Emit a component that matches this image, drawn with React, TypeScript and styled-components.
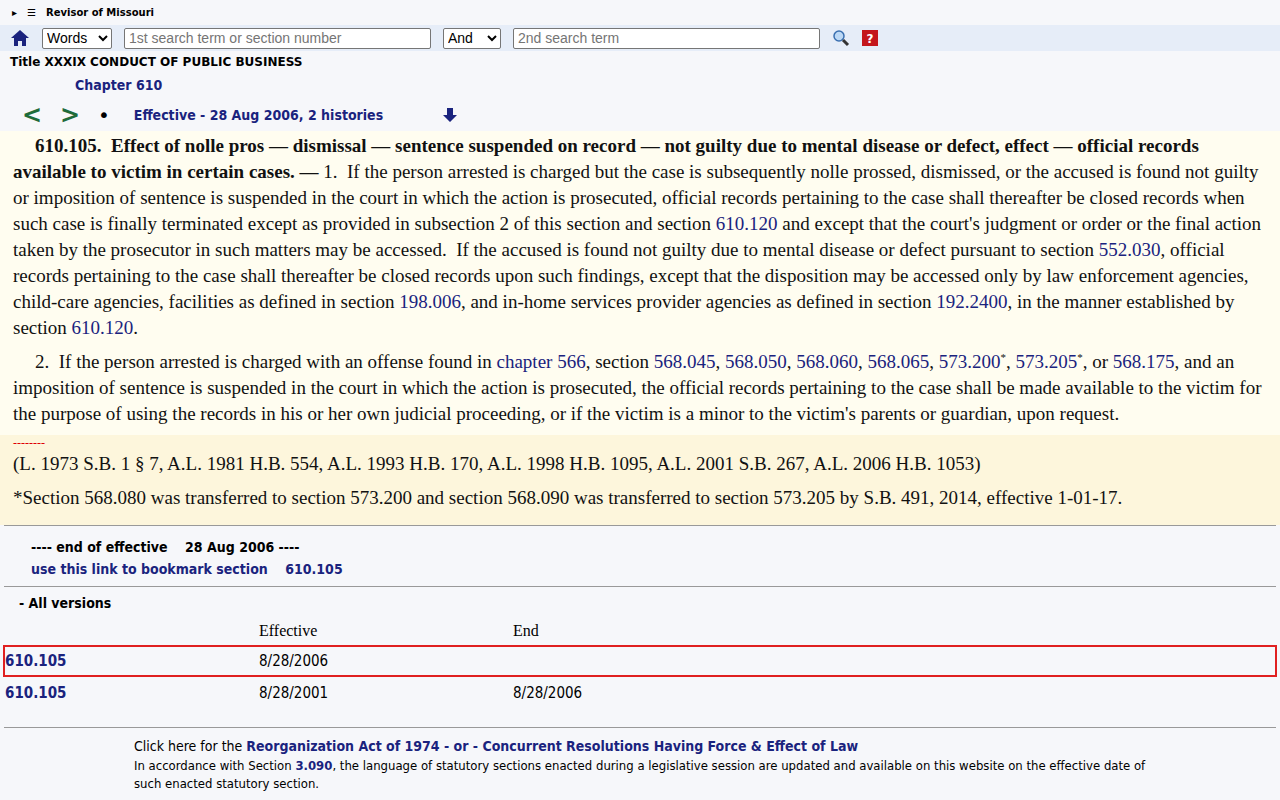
import styled, { createGlobalStyle } from "styled-components";

const Global = createGlobalStyle`
  body { margin: 0; background: #f6f7fa; font-family: "DejaVu Sans", Verdana, sans-serif; }
  a { color: #1a237e; text-decoration: none; }
`;

const TopLine = styled.div`
  display: flex; align-items: center; gap: 10px;
  height: 25px; padding: 0 12px; font-size: 10px; font-weight: 700;
`;
const Toolbar = styled.div`
  display: flex; align-items: center; height: 26px; background: #e6edf8;
  padding: 0 10px; gap: 12px;
`;
const Select = styled.select<{ $w: number }>`
  width: ${(p) => p.$w}px; height: 21px; font: 14px "Liberation Sans", Arial, sans-serif;
  border: 1px solid #767676; border-radius: 2px; background: #fff;
`;
const Input = styled.input`
  width: 307px; height: 21px; box-sizing: border-box; padding: 0 4px;
  font: 14px "Liberation Sans", Arial, sans-serif; border: 1px solid #767676; border-radius: 2px;
`;
const Title = styled.div`
  font-size: 12px; font-weight: 700; padding: 4px 10px 0; height: 16px;
`;
const Chapter = styled.div`
  font: 700 14px "DejaVu Sans Condensed", "DejaVu Sans", sans-serif;
  color: #1a237e; padding: 6px 0 0 75px; height: 22px;
`;
const NavRow = styled.div`
  display: flex; align-items: center; height: 32px; padding-left: 22px;
`;
const Arrow = styled.span`
  color: #1e6b3a; font-size: 24px; font-weight: 700; width: 38px;
`;
const Dot = styled.span`font-size: 20px;`;
const Effective = styled.span`
  color: #1a237e; font: 700 14px "DejaVu Sans Condensed", "DejaVu Sans", sans-serif;
  margin-left: 24px; width: 308px;
`;
const Section = styled.div`
  background: #fffdf0; font-family: "Liberation Serif", "Times New Roman", serif;
  font-size: 19px; line-height: 26px; padding: 2px 12px 0 13px; color: #111;
  a { color: #1a237e; }
  sup { font-size: 11px; line-height: 0; }
`;
const Para = styled.p`margin: 0 0 8px; text-indent: 22px;`;
const Hist = styled.div`
  background: #fdf6dc; margin: 0 -12px 0 -13px; padding: 0 13px 6px;
  p { margin: 0 0 8px; }
`;
const Dash = styled.div`color: #d00; font-size: 12px; line-height: 16px;`;
const Rule = styled.hr`border: 0; border-top: 1px solid #999; margin: 0 4px;`;
const EndBlock = styled.div`
  padding: 10px 0 6px 31px; line-height: 22px;
  font: 700 14px/22px "DejaVu Sans Condensed", "DejaVu Sans", sans-serif;
`;
const Versions = styled.div`padding: 8px 0 0;`;
const VersionsTitle = styled.div`
  font: 700 14px "DejaVu Sans Condensed", "DejaVu Sans", sans-serif;
  padding-left: 19px; height: 22px;
`;
const Grid = styled.div<{ $box?: boolean }>`
  display: grid; grid-template-columns: 254px 254px 1fr; align-items: center;
  height: 28px; margin: 0 3px; padding-left: 0;
  border: 2px solid ${(p) => (p.$box ? "#e02020" : "transparent")};
  font: 15px "DejaVu Sans Condensed", "DejaVu Sans", sans-serif;
  a { font-weight: 700; }
`;
const Head = styled(Grid)`
  height: 24px; font: 16px "Liberation Serif", serif;
`;
const Spacer = styled.div`height: 18px;`;
const Foot = styled.div`
  padding: 8px 130px 0 134px; font-size: 14px; line-height: 21px;
  font-family: "DejaVu Sans Condensed", "DejaVu Sans", sans-serif;
  a { font-weight: 700; }
`;
const FootSmall = styled.div`font-size: 13px; line-height: 18px;`;

export default function App() {
  return (
    <>
      <Global />
      <TopLine>
        <span>▸</span><span>☰</span><span>Revisor of Missouri</span>
      </TopLine>
      <Toolbar>
        <svg width="20" height="18" viewBox="0 0 20 18"><path d="M10 1 L1 9 H4 V17 H8 V12 H12 V17 H16 V9 H19 Z" fill="#1a237e" /></svg>
        <Select $w={70}><option>Words</option></Select>
        <Input placeholder="1st search term or section number" />
        <Select $w={58}><option>And</option></Select>
        <Input placeholder="2nd search term" />
        <svg width="18" height="18" viewBox="0 0 18 18"><circle cx="7" cy="7" r="5" fill="#bcd8f5" stroke="#3a6fb0" strokeWidth="1.5" /><path d="M11 11 L16 16" stroke="#333" strokeWidth="3" /></svg>
        <svg width="16" height="16" viewBox="0 0 16 16"><rect width="16" height="16" fill="#c4161c" /><text x="8" y="13" fontSize="12" fontWeight="700" fill="#fff" textAnchor="middle" fontFamily="DejaVu Sans">?</text></svg>
      </Toolbar>
      <Title>Title XXXIX CONDUCT OF PUBLIC BUSINESS</Title>
      <Chapter>Chapter 610</Chapter>
      <NavRow>
        <Arrow>&lt;</Arrow><Arrow>&gt;</Arrow><Dot>•</Dot>
        <Effective>Effective - 28 Aug 2006, 2 histories</Effective>
        <svg width="16" height="16" viewBox="0 0 16 16"><path d="M5 1 H11 V8 H15 L8 15 L1 8 H5 Z" fill="#1a237e" /></svg>
      </NavRow>
      <Section>
        <Para>
          <b>610.105.&nbsp; Effect of nolle pros — dismissal — sentence suspended on record — not guilty due to mental disease or defect, effect — official records available to victim in certain cases. — </b>1.&nbsp; If the person arrested is charged but the case is subsequently nolle prossed, dismissed, or the accused is found not guilty or imposition of sentence is suspended in the court in which the action is prosecuted, official records pertaining to the case shall thereafter be closed records when such case is finally terminated except as provided in subsection 2 of this section and section <a>610.120</a> and except that the court's judgment or order or the final action taken by the prosecutor in such matters may be accessed.&nbsp; If the accused is found not guilty due to mental disease or defect pursuant to section <a>552.030</a>, official records pertaining to the case shall thereafter be closed records upon such findings, except that the disposition may be accessed only by law enforcement agencies, child-care agencies, facilities as defined in section <a>198.006</a>, and in-home services provider agencies as defined in section <a>192.2400</a>, in the manner established by section <a>610.120</a>.
        </Para>
        <Para>
          2.&nbsp; If the person arrested is charged with an offense found in <a>chapter 566</a>, section <a>568.045</a>, <a>568.050</a>, <a>568.060</a>, <a>568.065</a>, <a>573.200</a><sup>*</sup>, <a>573.205</a><sup>*</sup>, or <a>568.175</a>, and an imposition of sentence is suspended in the court in which the action is prosecuted, the official records pertaining to the case shall be made available to the victim for the purpose of using the records in his or her own judicial proceeding, or if the victim is a minor to the victim's parents or guardian, upon request.
        </Para>
        <Hist>
          <Dash>--------</Dash>
          <p>(L. 1973 S.B. 1 § 7, A.L. 1981 H.B. 554, A.L. 1993 H.B. 170, A.L. 1998 H.B. 1095, A.L. 2001 S.B. 267, A.L. 2006 H.B. 1053)</p>
          <p>*Section 568.080 was transferred to section 573.200 and section 568.090 was transferred to section 573.205 by S.B. 491, 2014, effective 1-01-17.</p>
        </Hist>
      </Section>
      <Rule />
      <EndBlock>
        <div>---- end of effective &nbsp;&nbsp; 28 Aug 2006 ----</div>
        <a>use this link to bookmark section &nbsp;&nbsp; 610.105</a>
      </EndBlock>
      <Rule />
      <Versions>
        <VersionsTitle>- All versions</VersionsTitle>
        <Head><span /><span>Effective</span><span>End</span></Head>
        <Grid $box><a>610.105</a><span>8/28/2006</span><span /></Grid>
        <Grid><a>610.105</a><span>8/28/2001</span><span>8/28/2006</span></Grid>
      </Versions>
      <Spacer />
      <Rule />
      <Foot>
        <div>Click here for the <a>Reorganization Act of 1974 - or - Concurrent Resolutions Having Force &amp; Effect of Law</a></div>
        <FootSmall>In accordance with Section <a>3.090</a>, the language of statutory sections enacted during a legislative session are updated and available on this website on the effective date of such enacted statutory section.</FootSmall>
      </Foot>
    </>
  );
}
